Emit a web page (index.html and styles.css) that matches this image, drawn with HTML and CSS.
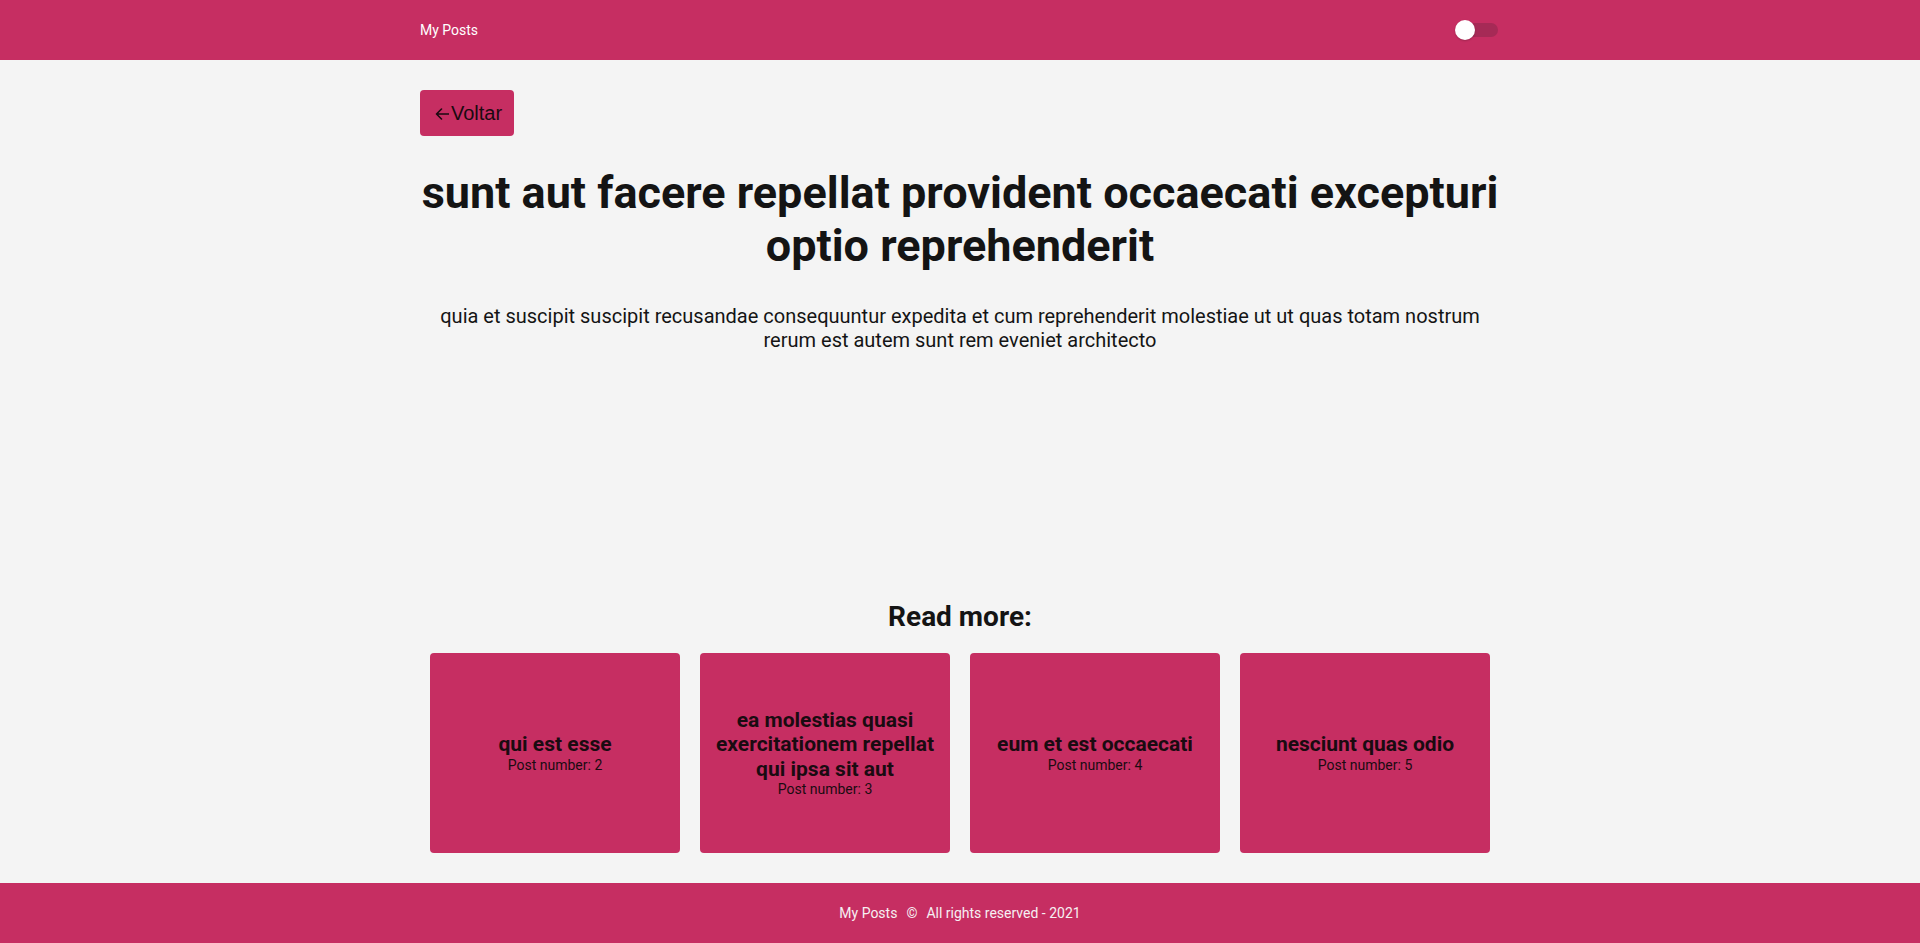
FILE: index.html
```html
<!DOCTYPE html>
<html lang="pt">
<head>
<meta charset="utf-8">
<title>My Posts</title>
<link rel="stylesheet" href="styles.css">
</head>
<body>
<div class="page">
  <header class="topbar">
    <div class="container topbar-inner">
      <span class="brand">My Posts</span>
      <span class="switch" aria-hidden="true">
        <span class="switch-track"></span>
        <span class="switch-thumb"></span>
      </span>
    </div>
  </header>

  <main class="container main">
    <div class="back-row">
      <button class="back-btn" type="button">
        <svg class="arrow" width="14" height="12" viewBox="0 0 14 12" aria-hidden="true">
          <path d="M13.5 6H1.5M6.5 1L1.5 6l5 5" fill="none" stroke="#1a0a10" stroke-width="1.6" stroke-linecap="round" stroke-linejoin="round"/>
        </svg>Voltar
      </button>
    </div>
    <h1 class="post-title">sunt aut facere repellat provident occaecati excepturi optio reprehenderit</h1>
    <p class="post-body">quia et suscipit suscipit recusandae consequuntur expedita et cum reprehenderit molestiae ut ut quas totam nostrum rerum est autem sunt rem eveniet architecto</p>

    <section class="read-more">
      <h2 class="read-more-title">Read more:</h2>
      <div class="cards">
        <a class="card"><span class="card-title">qui est esse</span><span class="card-num">Post number: 2</span></a>
        <a class="card"><span class="card-title">ea molestias quasi exercitationem repellat qui ipsa sit aut</span><span class="card-num">Post number: 3</span></a>
        <a class="card"><span class="card-title">eum et est occaecati</span><span class="card-num">Post number: 4</span></a>
        <a class="card"><span class="card-title">nesciunt quas odio</span><span class="card-num">Post number: 5</span></a>
      </div>
    </section>
  </main>

  <footer class="footer">
    <span>My Posts</span><span class="copy">&copy;</span><span>All rights reserved - 2021</span>
  </footer>
</div>
</body>
</html>
```

FILE: styles.css
```css
* { box-sizing: border-box; }

html, body {
  margin: 0;
  padding: 0;
  background: #f4f4f4;
  font-family: Roboto, "Noto Sans", sans-serif;
  color: #141414;
}

.page {
  min-height: 100vh;
  display: flex;
  flex-direction: column;
}

.container {
  width: 1080px;
  margin: 0 auto;
}

.topbar {
  background: #c62e62;
  height: 60px;
  flex: none;
}

.topbar-inner {
  height: 100%;
  display: flex;
  align-items: center;
  justify-content: space-between;
}

.brand {
  color: #ffffff;
  font-size: 14px;
}

.switch {
  position: relative;
  width: 43px;
  height: 20px;
  margin-right: 2px;
  display: inline-block;
}

.switch-track {
  position: absolute;
  right: 0;
  top: 3px;
  width: 34px;
  height: 14px;
  border-radius: 7px;
  background: #a62a56;
}

.switch-thumb {
  position: absolute;
  left: 0;
  top: 0;
  width: 20px;
  height: 20px;
  border-radius: 50%;
  background: #ffffff;
  box-shadow: 0 1px 2px rgba(0,0,0,0.2);
}

.main {
  flex: 1;
  display: flex;
  flex-direction: column;
  padding-top: 30px;
}

.back-row {
  display: flex;
}

.back-btn {
  background: #c62e62;
  border: none;
  border-radius: 4px;
  height: 46px;
  padding: 0 12px 0 15px;
  font-family: "Liberation Sans", Arial, sans-serif;
  font-size: 20px;
  color: #1a0a10;
  display: flex;
  align-items: center;
  cursor: pointer;
}

.arrow {
  margin-right: 2px;
  margin-top: 1px;
}

.post-title {
  margin: 31px 0 0;
  text-align: center;
  font-size: 45px;
  line-height: 52.8px;
  font-weight: 700;
  color: #141414;
}

.post-body {
  margin: 31px 0 0;
  text-align: center;
  font-size: 20px;
  line-height: 24.5px;
  color: #141414;
  padding: 0 10px;
}

.read-more {
  margin-top: auto;
  padding-bottom: 20px;
}

.read-more-title {
  margin: 0 0 10px;
  text-align: center;
  font-size: 28px;
  line-height: 33px;
  font-weight: 700;
}

.cards {
  display: flex;
}

.card {
  width: 250px;
  height: 200px;
  margin: 10px;
  background: #c62e62;
  border-radius: 4px;
  display: flex;
  flex-direction: column;
  align-items: center;
  justify-content: center;
  text-align: center;
  padding: 0 10px;
  color: #1a0b11;
}

.card-title {
  font-size: 21px;
  line-height: 24.5px;
  font-weight: 700;
}

.card-num {
  font-size: 14px;
  line-height: 17px;
}

.footer {
  background: #c62e62;
  height: 60px;
  flex: none;
  display: flex;
  align-items: center;
  justify-content: center;
  color: #f6f0f2;
  font-size: 14px;
  gap: 9px;
}

.copy {
  font-size: 14px;
}
```
